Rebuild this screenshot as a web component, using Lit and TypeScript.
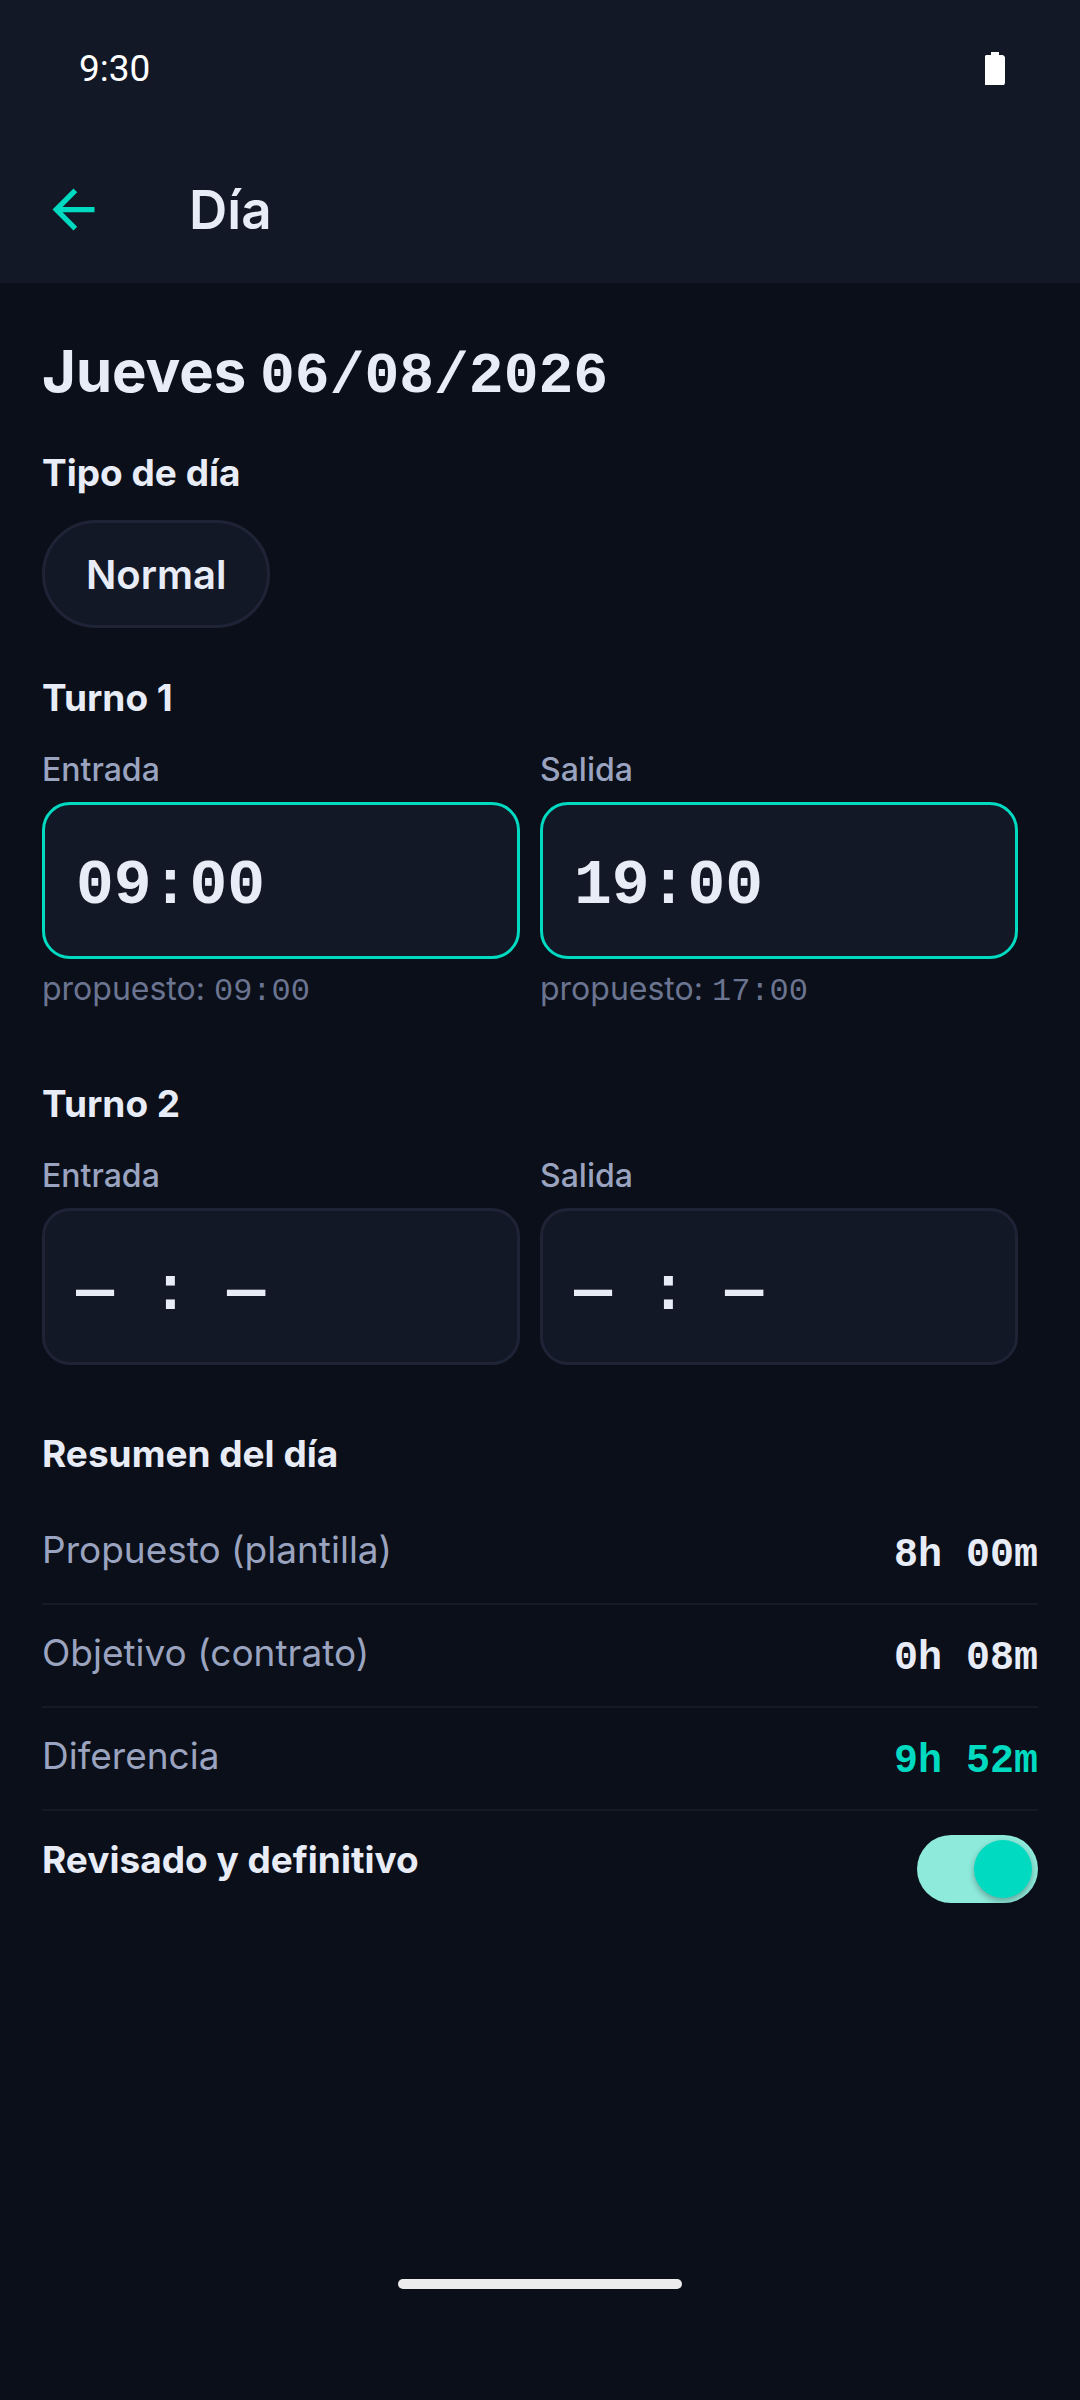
import { LitElement, html, css } from "lit";
import { customElement, property, state } from "lit/decorators.js";

const tokens = css`
  :host {
    --bg: #0a0f19;
    --surface: #121826;
    --line: #1e2436;
    --divider: #151a29;
    --text: #e8ecf6;
    --muted: #9aa3bf;
    --hint: #6b7490;
    --accent: #00dac1;
    --mono: "Liberation Mono", monospace;
    --sans: Inter, "Liberation Sans", sans-serif;
    font-family: var(--sans);
    color: var(--text);
  }
  * {
    box-sizing: border-box;
  }
`;

@customElement("time-field")
class TimeField extends LitElement {
  @property() label = "";
  @property() value = "";
  @property() proposed = "";

  static styles = [
    tokens,
    css`
      :host {
        display: block;
        flex: 1;
        min-width: 0;
        padding-right: 20px;
      }
      .label {
        display: block;
        font-size: 32px;
        line-height: 40px;
        font-weight: 500;
        color: var(--muted);
      }
      .box {
        display: block;
        width: 100%;
        height: 157px;
        margin: 12px 0 0;
        padding: 12px 31px 0;
        border: 3px solid var(--line);
        border-radius: 28px;
        background: var(--surface);
        color: var(--text);
        font-family: var(--mono);
        font-size: 63px;
        font-weight: 700;
        outline: none;
      }
      .filled {
        border-color: var(--accent);
      }
      .hint {
        margin: 10px 0 6px;
        font-size: 32px;
        line-height: 40px;
        color: var(--hint);
      }
      .digits {
        font-family: var(--mono);
        line-height: 1;
      }
    `,
  ];

  render() {
    return html`
      <label class="label" for="time">${this.label}</label>
      <input
        id="time"
        class="box ${this.proposed ? "filled" : ""}"
        type="text"
        .value=${this.value}
      />
      ${this.proposed
        ? html`<p class="hint">
            propuesto: <span class="digits">${this.proposed}</span>
          </p>`
        : ""}
    `;
  }
}

@customElement("app-root")
class AppRoot extends LitElement {
  @state() private reviewed = true;

  private summary = [
    { name: "Propuesto (plantilla)", value: "8h 00m", accent: false },
    { name: "Objetivo (contrato)", value: "0h 08m", accent: false },
    { name: "Diferencia", value: "9h 52m", accent: true },
  ];

  static styles = [
    tokens,
    css`
      :host {
        display: flex;
        flex-direction: column;
        min-height: 100vh;
        background: var(--bg);
      }
      .header {
        background: var(--surface);
      }
      .status {
        display: flex;
        align-items: center;
        justify-content: space-between;
        height: 136px;
        padding: 0 75px 0 79px;
        font-family: Roboto, sans-serif;
        font-size: 37px;
        color: #fff;
      }
      .battery {
        display: block;
        width: 20px;
        height: 33px;
      }
      .bar {
        display: flex;
        align-items: center;
        gap: 84px;
        height: 147px;
        padding: 0 42px;
      }
      .back {
        display: block;
        padding: 0;
        border: 0;
        background: none;
        color: var(--accent);
      }
      .arrow {
        display: block;
        width: 63px;
        height: 63px;
      }
      .title {
        margin: 0;
        font-size: 53px;
        line-height: 64px;
        font-weight: 600;
      }
      .main {
        flex: 1;
        padding: 53px 42px 0;
      }
      .date {
        margin: 0;
        font-size: 58px;
        line-height: 70px;
        font-weight: 700;
      }
      .digits {
        font-family: var(--mono);
        line-height: 1;
      }
      .heading {
        margin: 66px 0 0;
        font-size: 37px;
        line-height: 45px;
        font-weight: 700;
      }
      .type {
        margin-top: 44px;
      }
      .first {
        margin-top: 47px;
      }
      .chip {
        display: block;
        height: 108px;
        margin-top: 25px;
        padding: 0 41px;
        border: 3px solid var(--line);
        border-radius: 54px;
        background: var(--surface);
        color: var(--text);
        font-family: inherit;
        font-size: 40px;
        font-weight: 600;
      }
      .shift {
        display: flex;
        margin-top: 30px;
      }
      .summary {
        width: 100%;
        margin-top: 26px;
        border-spacing: 0;
      }
      .name,
      .value {
        height: 103px;
        border-bottom: 2px solid var(--divider);
        line-height: 45px;
        vertical-align: top;
      }
      .name {
        padding: 25px 0 0;
        text-align: left;
        font-size: 37px;
        font-weight: 400;
        color: var(--muted);
      }
      .value {
        padding: 31px 0 0;
        text-align: right;
        font-family: var(--mono);
        font-size: 40px;
        font-weight: 700;
      }
      .accent {
        color: var(--accent);
      }
      .review {
        display: flex;
        justify-content: space-between;
        margin-top: 24px;
      }
      .review-label {
        font-size: 37px;
        line-height: 50px;
        font-weight: 700;
      }
      .switch {
        appearance: none;
        display: flex;
        align-items: center;
        width: 121px;
        height: 68px;
        margin: 0;
        padding: 0 6px;
        border-radius: 34px;
        background: #2a3146;
      }
      .switch:checked {
        justify-content: flex-end;
        background: #8eeadb;
      }
      .switch::before {
        content: "";
        width: 58px;
        height: 58px;
        border-radius: 50%;
        background: var(--accent);
        box-shadow: 0 3px 6px rgba(0, 0, 0, 0.3);
      }
      .footer {
        display: flex;
        justify-content: center;
        padding-bottom: 111px;
      }
      .pill {
        width: 284px;
        height: 10px;
        border-radius: 5px;
        background: #ececec;
      }
    `,
  ];

  render() {
    return html`
      <header class="header">
        <div class="status">
          <span>9:30</span>
          <svg class="battery" viewBox="0 0 20 33" fill="#fff" aria-hidden="true">
            <path d="M6 0h8v3h4l2 2v26l-1 2H0V4l1-1h5z" />
          </svg>
        </div>
        <div class="bar">
          <button class="back" type="button" aria-label="Volver">
            <svg class="arrow" viewBox="0 0 24 24" fill="currentColor" aria-hidden="true">
              <path d="M20 11H7.83l5.59-5.59L12 4l-8 8 8 8 1.41-1.41L7.83 13H20v-2z" />
            </svg>
          </button>
          <h1 class="title">Día</h1>
        </div>
      </header>
      <main class="main">
        <h2 class="date">Jueves <span class="digits">06/08/2026</span></h2>
        <h3 class="heading type">Tipo de día</h3>
        <button class="chip" type="button">Normal</button>
        <h3 class="heading first">Turno 1</h3>
        <div class="shift">
          <time-field label="Entrada" value="09:00" proposed="09:00"></time-field>
          <time-field label="Salida" value="19:00" proposed="17:00"></time-field>
        </div>
        <h3 class="heading">Turno 2</h3>
        <div class="shift">
          <time-field label="Entrada" value="— : —"></time-field>
          <time-field label="Salida" value="— : —"></time-field>
        </div>
        <h3 class="heading">Resumen del día</h3>
        <table class="summary">
          <tbody>
            ${this.summary.map(
              (row) => html`<tr>
                <th class="name" scope="row">${row.name}</th>
                <td class="value ${row.accent ? "accent" : ""}">${row.value}</td>
              </tr>`
            )}
          </tbody>
        </table>
        <div class="review">
          <label class="review-label" for="reviewed">Revisado y definitivo</label>
          <input
            id="reviewed"
            class="switch"
            type="checkbox"
            role="switch"
            .checked=${this.reviewed}
            @change=${(e: Event) =>
              (this.reviewed = (e.target as HTMLInputElement).checked)}
          />
        </div>
      </main>
      <footer class="footer"><div class="pill"></div></footer>
    `;
  }
}
